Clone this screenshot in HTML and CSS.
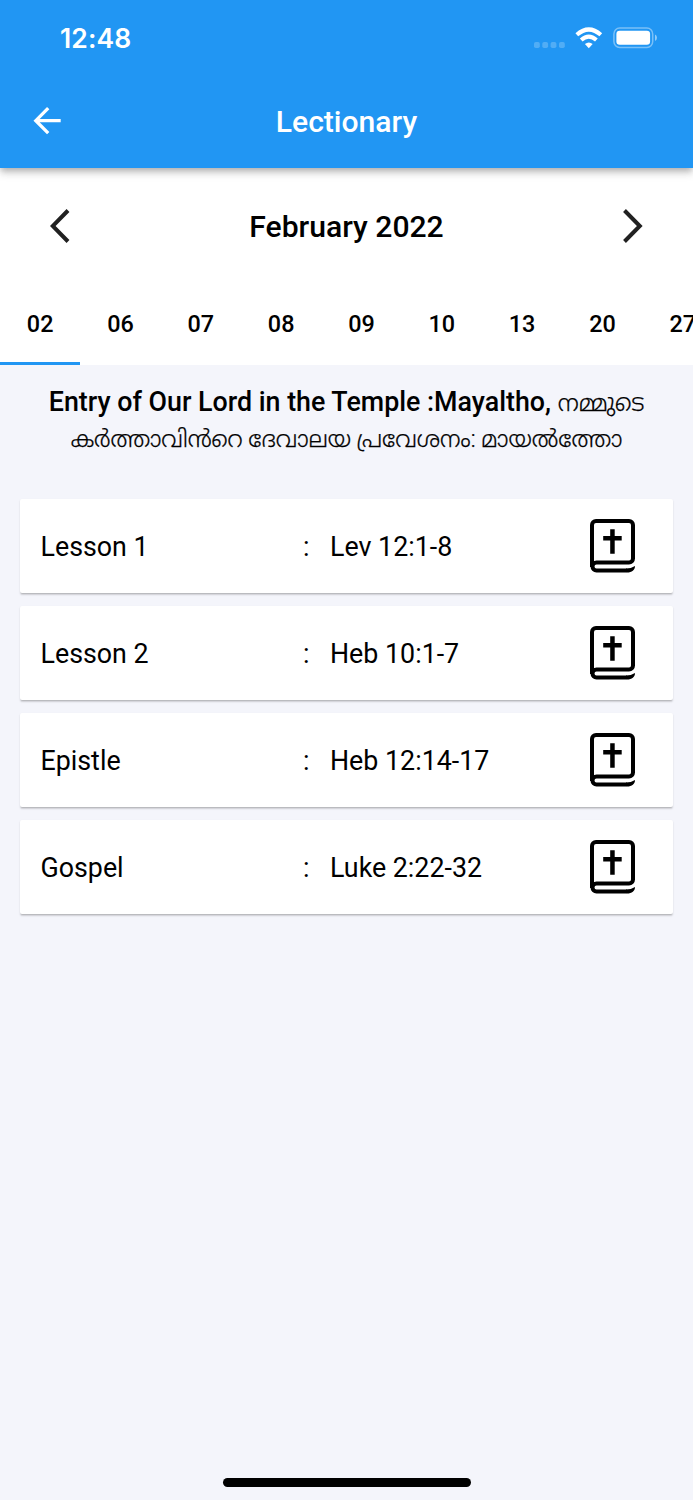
FILE: index.html
```html
<!DOCTYPE html>
<html lang="en">
<head>
<meta charset="utf-8">
<title>Lectionary</title>
<link rel="stylesheet" href="styles.css">
</head>
<body>
<svg class="defs" width="0" height="0" aria-hidden="true">
  <symbol id="bible" viewBox="0 0 46 54">
    <path d="M2 48V6a4 4 0 0 1 4-4h33a4 4 0 0 1 4 4v33.500a4 4 0 0 1-4 4H6.500a4 4 0 0 0-4 4a4 4 0 0 0 4 4H37" fill="none" stroke="#000" stroke-width="4"/>
    <path d="M36 49.500q5 0 9-2.500c0 4-3 6.500-8 6.500z"/>
    <path d="M20.200 10.300h4.500v6.700h7v4.400h-7v13.300h-4.500V21.400h-7v-4.400h7z"/>
  </symbol>
</svg>
<div class="screen">
  <header class="top">
    <div class="status">
      <span class="time">12:48</span>
      <svg class="indicators" width="126" height="24" viewBox="0 0 126 24">
        <g fill="#fff" fill-opacity=".22"><rect x="4" y="16" width="5.800" height="6" rx="1.800"/><rect x="12.300" y="16" width="5.800" height="6" rx="1.800"/><rect x="20.600" y="16" width="5.800" height="6" rx="1.800"/><rect x="29" y="16" width="5.800" height="6" rx="1.800"/></g>
        <g fill="none" stroke="#fff" stroke-width="4.100"><path d="M46.800 8.800Q58.800-1.800 70.800 8.800"/><path d="M51.200 14Q58.800 7.300 66.400 14"/></g>
        <path d="M54.900 18q3.900-3.200 7.800 0l-3.900 4.200z" fill="#fff"/>
        <rect x="83.900" y="2.100" width="38.800" height="19.300" rx="5.800" fill="none" stroke="#fff" stroke-opacity=".4" stroke-width="1.500"/>
        <rect x="86.400" y="4.800" width="33.700" height="14" rx="3.300" fill="#fff"/>
        <path d="M125 8.500q2 .8 2 3.200t-2 3.200z" fill="#fff" fill-opacity=".5"/>
      </svg>
    </div>
    <div class="appbar">
      <svg class="back" width="28" height="28" viewBox="0 0 28 28"><path d="M27.700 13.700H3.500M15.200 1.200L2.800 13.700l12.400 12.500" fill="none" stroke="#fff" stroke-width="3.300"/></svg>
      <h1>Lectionary</h1>
    </div>
  </header>
  <section class="month">
    <svg width="20" height="34" viewBox="0 0 20 34"><path d="M18 1.500L2.700 17 18 32.500" fill="none" stroke="#212121" stroke-width="4"/></svg>
    <h2>February 2022</h2>
    <svg width="20" height="34" viewBox="0 0 20 34"><path d="M1.500 1.500L16.800 17 1.500 32.500" fill="none" stroke="#212121" stroke-width="4"/></svg>
  </section>
  <nav class="days">
    <span class="day active">02</span><span class="day">06</span><span class="day">07</span><span class="day">08</span><span class="day">09</span><span class="day">10</span><span class="day">13</span><span class="day">20</span><span class="day">27</span>
  </nav>
  <div class="feast">
    <p>Entry of Our Lord in the Temple :Mayaltho, <span class="ml" lang="ml">നമ്മുടെ</span></p>
    <p class="ml second" lang="ml">കർത്താവിൻറെ ദേവാലയ പ്രവേശനം: മായൽത്തോ</p>
  </div>
  <main class="lessons">
    <div class="card"><span class="label">Lesson 1</span><span class="colon">:</span><span class="ref">Lev 12:1-8</span><svg class="book"><use href="#bible"/></svg></div>
    <div class="card"><span class="label">Lesson 2</span><span class="colon">:</span><span class="ref">Heb 10:1-7</span><svg class="book"><use href="#bible"/></svg></div>
    <div class="card"><span class="label">Epistle</span><span class="colon">:</span><span class="ref">Heb 12:14-17</span><svg class="book"><use href="#bible"/></svg></div>
    <div class="card"><span class="label">Gospel</span><span class="colon">:</span><span class="ref">Luke 2:22-32</span><svg class="book"><use href="#bible"/></svg></div>
  </main>
  <div class="home"></div>
</div>
</body>
</html>
```
FILE: styles.css
```css
* { box-sizing: border-box; }
body { margin: 0; font-family: Roboto, "Noto Sans Malayalam", sans-serif; color: #000; }
h1, h2, p { margin: 0; font-weight: 500; }
svg { display: block; flex: none; }
.defs { position: absolute; }
.screen { width: 693px; height: 1500px; overflow: hidden; background: #f4f5fb; display: flex; flex-direction: column; }
.top { position: relative; z-index: 1; height: 167.500px; flex: none; background: #2196f3; color: #fff; box-shadow: 0 3px 6px -1px rgba(0,0,0,.2), 0 6px 8px rgba(0,0,0,.12), 0 2px 10px rgba(0,0,0,.06); }
.status { height: 74px; display: flex; justify-content: space-between; align-items: flex-start; padding: 22px 35px 0 60px; }
.status .time { font: 600 26.500px/33px Inter, sans-serif; letter-spacing: .1px; }
.indicators { margin-top: 4px; overflow: visible; margin-right: 2px; }
.appbar { height: 94px; display: grid; grid-template-columns: 100px 1fr 100px; align-items: center; }
.back { margin-left: 33px; }
.appbar h1 { text-align: center; font-size: 30.100px; line-height: 36px; padding-top: 1px; }
.month { height: 117px; flex: none; padding: 0 50px; display: flex; align-items: center; justify-content: space-between; background: #fff; }
.month h2 { font-size: 30.100px; line-height: 36px; padding-top: 2px; }
.days { height: 80.500px; flex: none; display: flex; background: #fff; overflow: hidden; }
.day { width: 80.330px; flex: none; text-align: center; font-size: 23.400px; line-height: 28px; font-weight: 500; padding-top: 25px; }
.day.active { border-bottom: 3.300px solid #2196f3; }
.feast { height: 134px; flex: none; padding-top: 19px; text-align: center; font-size: 26.800px; white-space: nowrap; }
.feast p { height: 37px; line-height: 37px; }
.feast .ml { font-weight: 300; font-size: 23.900px; -webkit-text-stroke: .25px #000; }
.feast .second { font-size: 23.300px; }
.lessons { display: flex; flex-direction: column; gap: 13.400px; padding: 0 20px; }
.card { height: 93.700px; display: grid; grid-template-columns: 262.500px 27px 259.500px 46px; align-items: center; padding-left: 20.500px; background: #fff; border-radius: 2px; font-size: 26.800px; box-shadow: 0 1.700px 1.700px -1px rgba(0,0,0,.18), 0 1.500px 2px rgba(0,0,0,.12); }
.card span { padding-top: 2px; }
.book { width: 46px; height: 54px; }
.home { width: 248px; height: 8.500px; margin: auto auto 13.500px 222.500px; border-radius: 5px; background: #000; }
```
